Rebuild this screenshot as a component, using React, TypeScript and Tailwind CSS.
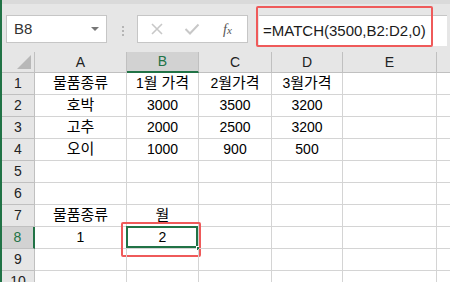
import React from 'react'

const cols = [
  { key: 'A', w: 'w-[92px]' },
  { key: 'B', w: 'w-[72px]' },
  { key: 'C', w: 'w-[73px]' },
  { key: 'D', w: 'w-[71px]' },
  { key: 'E', w: 'w-[94px]' },
  { key: 'F', w: 'w-[40px]' },
]

const data: Record<number, string[]> = {
  1: ['물품종류', '1월 가격', '2월가격', '3월가격'],
  2: ['호박', '3000', '3500', '3200'],
  3: ['고추', '2000', '2500', '3200'],
  4: ['오이', '1000', '900', '500'],
  7: ['물품종류', '월'],
  8: ['1', '2'],
}

const font = { fontFamily: '"Segoe UI", "Liberation Sans", "Noto Sans CJK KR", sans-serif' }

// hangul runs a touch bigger, like Malgun Gothic next to Segoe digits
function CellText({ text }: { text: string }) {
  const parts = text.split(/([가-힣]+)/)
  return (
    <span className="whitespace-pre">
      {parts.map((p, i) =>
        /[가-힣]/.test(p) ? (
          <span key={i} className="text-[15px]">
            {p}
          </span>
        ) : (
          <span key={i}>{p}</span>
        )
      )}
    </span>
  )
}

export default function App() {
  const rows = [1, 2, 3, 4, 5, 6, 7, 8, 9, 10]
  return (
    <div className="w-[450px] h-[282px] overflow-hidden bg-white border-l-2 border-[#217346]" style={font}>
      {/* Formula bar */}
      <div className="h-[52px] bg-[#e6e6e6] border-t-[4px] border-[#dadada] flex items-start">
        <div className="ml-[4px] mt-[11px] w-[101px] h-[28px] bg-white border border-[#c6c6c6] flex items-center justify-between px-[7px]">
          <span className="text-[15px] text-[#333]">B8</span>
          <span className="w-0 h-0 border-l-[4px] border-r-[4px] border-t-[4px] border-l-transparent border-r-transparent border-t-[#777]" />
        </div>
        <div className="mt-[22px] ml-[15px] flex flex-col gap-[2px]">
          <span className="w-[2px] h-[2px] bg-[#b5b5b5]" />
          <span className="w-[2px] h-[2px] bg-[#b5b5b5]" />
          <span className="w-[2px] h-[2px] bg-[#b5b5b5]" />
        </div>
        <div className="ml-[13px] mt-[11px] w-[111px] h-[28px] bg-white border border-[#c6c6c6] flex items-center pl-[12px] gap-[20px]">
          <svg width="14" height="14" viewBox="0 0 14 14">
            <path d="M2 2 L12 12 M12 2 L2 12" stroke="#c8c8c8" strokeWidth="1.6" />
          </svg>
          <svg width="16" height="14" viewBox="0 0 16 14">
            <path d="M1.5 7 L6 11.5 L14.5 2.5" stroke="#c8c8c8" strokeWidth="2" fill="none" />
          </svg>
          <span className="text-[14px] italic text-[#555] ml-[3px]" style={{ fontFamily: '"Liberation Serif", serif' }}>
            f<span className="text-[11px]">x</span>
          </span>
        </div>
        <div className="relative ml-[8px] mt-[2px] flex-1 h-[40px]">
          <div className="absolute left-[3px] right-[3px] top-[9px] bottom-0 bg-white border-t border-[#c6c6c6] flex items-center pl-[4px]">
            <span className="text-[15px] text-[#1a1a1a]">=MATCH(3500,B2:D2,0)</span>
          </div>
          <div className="absolute left-0 top-0 w-[177px] h-[41px] border-2 border-[#ef5a5a] rounded-[2px]" />
        </div>
      </div>

      {/* Sheet */}
      <div className="flex flex-col">
        <div className="flex h-[21px]">
          <div className="w-[33px] shrink-0 bg-[#e6e6e6] border-r border-b border-[#c0c0c0] relative">
            <svg className="absolute right-[3px] bottom-[3px]" width="14" height="14" viewBox="0 0 14 14">
              <path d="M14 0 L14 14 L0 14 Z" fill="#b8b8b8" />
            </svg>
          </div>
          {cols.map((c) => (
            <div
              key={c.key}
              className={`${c.w} shrink-0 flex items-center justify-center text-[14px] border-r border-[#c0c0c0] ${
                c.key === 'B' ? 'bg-[#d2d2d2] text-[#217346] border-b-2 border-b-[#217346]' : 'bg-[#e6e6e6] text-[#222] border-b border-b-[#c0c0c0]'
              }`}
            >
              {c.key}
            </div>
          ))}
        </div>
        {rows.map((r) => (
          <div key={r} className="flex h-[22px]">
            <div
              className={`w-[33px] shrink-0 flex items-center justify-center text-[14px] border-b border-[#c0c0c0] ${
                r === 8 ? 'bg-[#d2d2d2] text-[#217346] border-r-2 border-r-[#217346]' : 'bg-[#e6e6e6] text-[#222] border-r border-r-[#c0c0c0]'
              }`}
            >
              {r}
            </div>
            {cols.map((c, i) => (
              <div
                key={c.key}
                className={`${c.w} shrink-0 relative flex items-center justify-center text-[14px] text-black border-r border-b border-[#d4d4d4]`}
              >
                {data[r]?.[i] ? <CellText text={data[r][i]} /> : null}
                {r === 8 && c.key === 'B' && (
                  <>
                    <div className="absolute -left-[1px] -top-[1px] right-0 bottom-0 border-2 border-[#217346]" />
                    <div className="absolute -right-[3px] -bottom-[3px] w-[5px] h-[5px] bg-[#217346] border border-white" />
                    <div className="absolute -left-[6px] -top-[5px] -right-[3px] -bottom-[9px] border-2 border-[#ef5a5a] rounded-[2px]" />
                  </>
                )}
              </div>
            ))}
          </div>
        ))}
      </div>
    </div>
  )
}
